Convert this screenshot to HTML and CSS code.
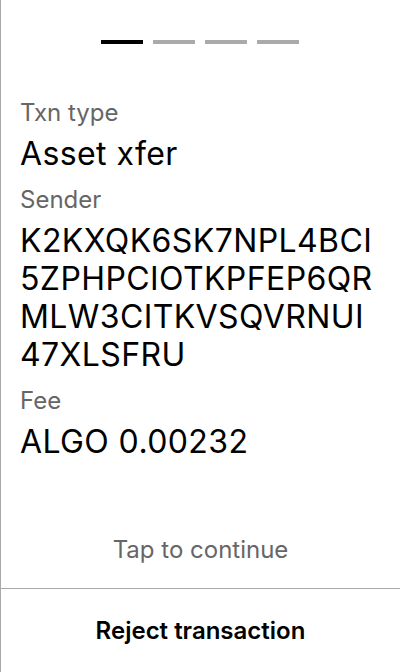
FILE: index.html
```html
<!DOCTYPE html>
<html lang="en">
<head>
<meta charset="utf-8">
<title>Transaction</title>
<link rel="stylesheet" href="styles.css">
</head>
<body>
<div class="screen">
  <div class="main">
    <div class="progress">
      <span class="bar active"></span>
      <span class="bar"></span>
      <span class="bar"></span>
      <span class="bar"></span>
    </div>
    <div class="fields">
      <div class="field">
        <div class="label">Txn type</div>
        <div class="value">Asset xfer</div>
      </div>
      <div class="field">
        <div class="label">Sender</div>
        <div class="value">K2KXQK6SK7NPL4BCI<br>5ZPHPCIOTKPFEP6QR<br>MLW3CITKVSQVRNUI<br>47XLSFRU</div>
      </div>
      <div class="field">
        <div class="label">Fee</div>
        <div class="value">ALGO 0.00232</div>
      </div>
    </div>
    <div class="tap">Tap to continue</div>
  </div>
  <div class="footer">Reject transaction</div>
</div>
</body>
</html>
```
FILE: styles.css
```css
* { box-sizing: border-box; }
html, body { margin: 0; padding: 0; background: #fff; }
body { font-family: "Inter", "Noto Sans", sans-serif; color: #000; }
.screen {
  width: 400px;
  height: 672px;
  border-left: 1px solid #aaa;
  display: flex;
  flex-direction: column;
}
.main {
  flex: 1;
  display: flex;
  flex-direction: column;
  padding: 40px 19px 0 19px;
}
.progress {
  display: flex;
  justify-content: center;
  gap: 10px;
  padding-right: 2px;
}
.bar {
  width: 42px;
  height: 4px;
  background: #aaa;
}
.bar.active { background: #000; }
.fields {
  margin-top: 54px;
  display: flex;
  flex-direction: column;
  gap: 12px;
}
.label {
  font-size: 24px;
  line-height: 29px;
  color: #666;
  margin-bottom: 8px;
}
.value {
  font-size: 32px;
  line-height: 38px;
  letter-spacing: 0.4px;
  color: #000;
}
.tap {
  margin-top: auto;
  margin-bottom: 24px;
  text-align: center;
  font-size: 24px;
  line-height: 29px;
  color: #666;
}
.footer {
  height: 84px;
  border-top: 1px solid #aaa;
  display: flex;
  align-items: center;
  justify-content: center;
  font-size: 24px;
  font-weight: 600;
  color: #000;
}
```
